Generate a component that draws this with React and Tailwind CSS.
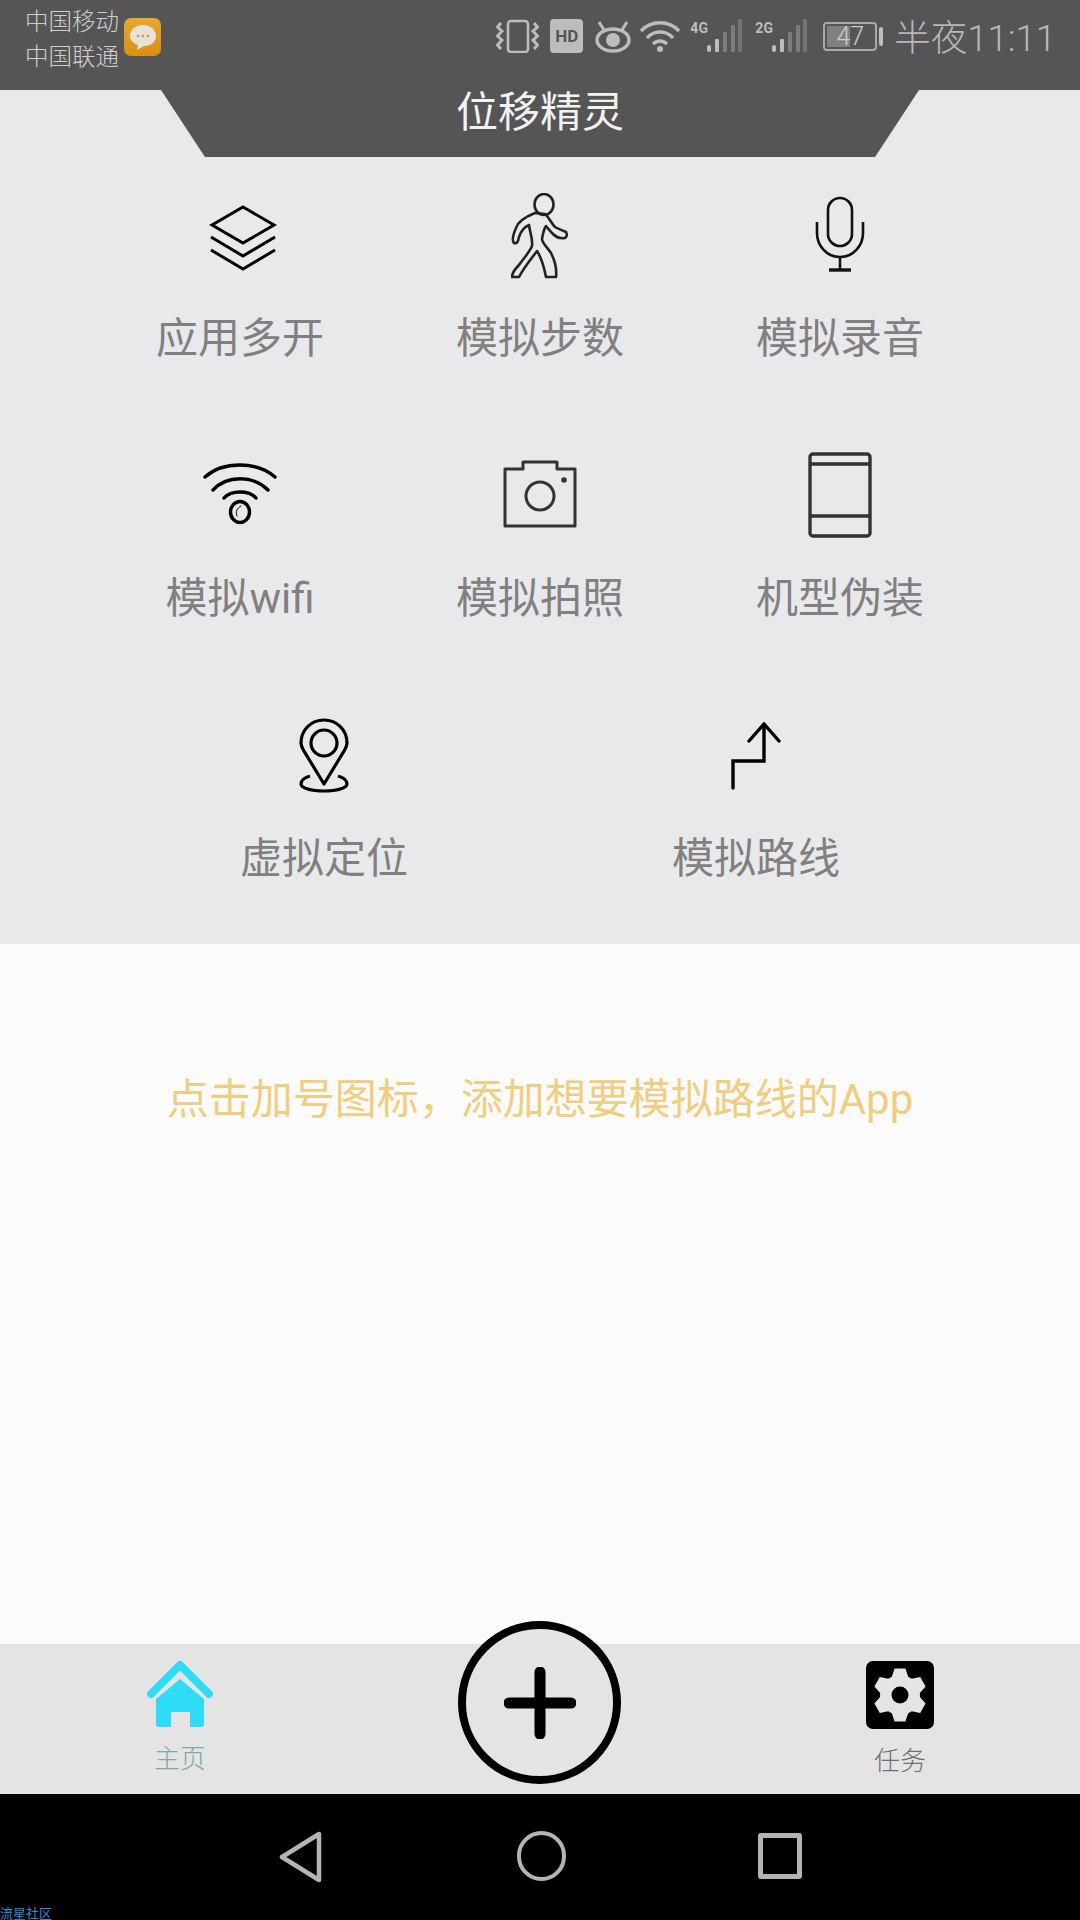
import React from "react";

const FONT = "font-['Roboto','Noto_Sans_CJK_SC',sans-serif]";

// six-tooth gear outline, tooth pointing up
const gearPoints = (cx, cy, outer, inner) => {
    const pts = [];
    for (let i = 0; i < 6; i++) {
        const a = (i * Math.PI) / 3 - Math.PI / 2;
        [
            [inner, -0.42],
            [outer, -0.2],
            [outer, 0.2],
            [inner, 0.42],
        ].forEach(([r, d]) => {
            pts.push(`${(cx + r * Math.cos(a + d)).toFixed(1)},${(cy + r * Math.sin(a + d)).toFixed(1)}`);
        });
    }
    return pts.join(" ");
};

const LayersIcon = () => (
    <svg width="68" height="66" viewBox="0 0 68 66" fill="none" stroke="#000" strokeWidth="3" strokeLinejoin="miter" className="mt-[6px] ml-[6px]">
        <path d="M34 2 L65 20 L34 38 L3 20 Z" />
        <path d="M2 32 L34 51 L66 32" />
        <path d="M2 45 L34 64 L66 45" />
    </svg>
);

const WalkerIcon = () => (
    <svg width="58" height="86" viewBox="0 0 58 86" fill="none" stroke="#222" strokeWidth="2.6" strokeLinejoin="round" className="mt-[2px]">
        <ellipse cx="33" cy="11.5" rx="9.5" ry="10.5" />
        <path d="M24 20 C14 24 7 28 5 35 C2 42 1 48 3 50 C6 51 7 49 8 44 C10 38 13 34 18 32 C19 40 22 46 21 53 C18 60 12 66 8 72 C3 77 1 80 1 84 L8 84 C12 76 20 66 26 58 C30 64 33 74 35 84 L45 84 C46 76 44 68 40 60 C36 54 31 50 31 46 C32 40 33 36 35 33 C39 38 44 45 50 45 C55 46 57 43 55 39 C51 37 47 36 44 34 C40 30 38 24 34 21 Z" />
    </svg>
);

const MicIcon = () => (
    <svg width="50" height="76" viewBox="0 0 50 76" fill="none" stroke="#111" strokeWidth="2.6" className="-mt-[2px]">
        <rect x="13" y="2" width="24" height="48" rx="12" />
        <path d="M2 26 V37 C2 50 12 61 25 61 C38 61 48 50 48 37 V26" />
        <path d="M25 61 V73" />
        <path d="M14 74 H36" strokeWidth="3.4" />
    </svg>
);

const WifiIcon = () => (
    <svg width="74" height="62" viewBox="0 0 74 62" fill="none" stroke="#000" strokeWidth="3.4" strokeLinecap="round" className="-mt-[2px]">
        <path d="M2 14 C20 -2 54 -2 72 14" />
        <path d="M10 27 C24 12 50 12 65 27" />
        <path d="M21 35 C28 27 46 27 53 35" />
        <ellipse cx="37" cy="49" rx="9.5" ry="10.5" />
        <path d="M34 53 C32 49 34 45 38 43" strokeWidth="1" />
    </svg>
);

const CameraIcon = () => (
    <svg width="76" height="68" viewBox="0 0 76 68" fill="none" stroke="#333" strokeWidth="3" strokeLinejoin="round" className="-mt-[2px]">
        <path d="M3 9 H21 V2 H55 V9 H73 V66 H3 Z" />
        <ellipse cx="38" cy="36" rx="14" ry="14" />
        <circle cx="62" cy="20" r="2.8" fill="#333" stroke="none" />
    </svg>
);

const PhoneIcon = () => (
    <svg width="64" height="86" viewBox="0 0 64 86" fill="none" stroke="#333" strokeWidth="3.4">
        <rect x="2" y="2" width="60" height="82" rx="3" />
        <path d="M2 12 H62 M2 64 H62" />
    </svg>
);

const PinIcon = () => (
    <svg width="50" height="75" viewBox="0 0 50 75" fill="none" stroke="#000" strokeWidth="3.2" strokeLinejoin="round">
        <path d="M25 66 L8 38 C4 32 2 29 2 25 C2 12 12 2 25 2 C38 2 48 12 48 25 C48 29 46 32 42 38 Z" />
        <ellipse cx="25" cy="25" rx="13" ry="13" />
        <path d="M11 58 C4 60 2 63 2 66 C2 70 12 73 25 73 C38 73 48 70 48 66 C48 63 46 60 39 58" />
    </svg>
);

const RouteIcon = () => (
    <svg width="52" height="68" viewBox="0 0 52 68" fill="none" stroke="#000" strokeWidth="3.4" strokeLinecap="round" className="mt-[1px]">
        <path d="M3 66 V39 H34 V3" />
        <path d="M19 19 L34 2 L49 19" />
    </svg>
);

const HomeIcon = () => (
    <svg width="66" height="66" viewBox="0 0 66 66" fill="#2fdcf8">
        <path d="M4 33 L33 4 L62 33" fill="none" stroke="#2fdcf8" strokeWidth="8" strokeLinecap="round" strokeLinejoin="round" />
        <path d="M33 18 L57 38 V63 C57 65 56 66 54 66 H43 V51 H24 V66 H12 C10 66 9 65 9 63 V38 Z" />
    </svg>
);

const GearIcon = () => (
    <svg width="68" height="68" viewBox="0 0 68 68">
        <rect width="68" height="68" rx="7" fill="#000" />
        <polygon points={gearPoints(34, 34, 27, 20)} fill="#e4e4e4" />
        <circle cx="34" cy="34" r="8.5" fill="#000" />
    </svg>
);

const Feature = ({ icon, label }) => (
    <div className="flex flex-col items-center">
        <div className="flex h-[90px] items-center justify-center">{icon}</div>
        <div className="mt-[34px] mb-[-2px] text-[42px] leading-[50px] text-[#808080]">{label}</div>
    </div>
);

const SignalBars = () => (
    <svg width="36" height="34" viewBox="0 0 36 34" className="-ml-[2px]">
        <rect x="1" y="26" width="4" height="7" rx="2" fill="#bdbdbd" />
        <rect x="9" y="20" width="4" height="13" rx="1" fill="#bdbdbd" />
        <rect x="17" y="13" width="4" height="20" rx="1" fill="#7d7d7d" />
        <rect x="25" y="6" width="4" height="27" rx="1" fill="#7d7d7d" />
        <rect x="32" y="0" width="4" height="33" rx="1" fill="#747474" />
    </svg>
);

const StatusBar = () => (
    <div className="flex h-[90px] items-start bg-[#555555] pr-[24px] pl-[25px]">
        <div className="mt-[5px] text-[23.5px] leading-[35px] font-light text-[#cfcfcf]">
            <div>中国移动</div>
            <div>中国联通</div>
        </div>
        <div className="mt-[18px] ml-[5px] flex h-[38px] w-[37px] items-center justify-center rounded-[7px] bg-gradient-to-b from-[#e6a92e] to-[#d98f12]">
            <svg width="28" height="28" viewBox="0 0 28 28">
                <path d="M14 2 C22 2 27 7 27 13 C27 19 22 23 15 23 L8 27 L9 22 C4 20 1 17 1 13 C1 7 6 2 14 2 Z" fill="#e8e2d4" />
                <circle cx="9" cy="13" r="1.3" fill="#d09a3a" />
                <circle cx="14" cy="13" r="1.3" fill="#d09a3a" />
                <circle cx="19" cy="13" r="1.3" fill="#d09a3a" />
            </svg>
        </div>
        <div className="mt-[18px] ml-auto flex h-[36px] items-center text-[#bdbdbd]">
            <svg width="43" height="34" viewBox="0 0 43 34" fill="none" stroke="#bdbdbd">
                <rect x="12" y="2" width="20" height="31" rx="3" strokeWidth="2.6" />
                <path d="M5 4 L1.5 8 L6 12 L1.5 17 L6 21 L1.5 26 L5 30" strokeWidth="3" />
                <path d="M38 4 L41.5 8 L37 12 L41.5 17 L37 21 L41.5 26 L38 30" strokeWidth="3" />
            </svg>
            <div className="ml-[11px] flex h-[34px] w-[33px] items-center justify-center rounded-[4px] bg-[#bdbdbd] text-[17px] leading-none font-bold text-[#555555]">
                HD
            </div>
            <svg width="38" height="34" viewBox="0 0 38 34" fill="none" stroke="#bdbdbd" className="ml-[11px]">
                <ellipse cx="19" cy="21" rx="16" ry="11" strokeWidth="3.4" />
                <circle cx="19" cy="21" r="7" fill="#bdbdbd" stroke="none" />
                <path d="M5 3 L10 11 M33 3 L28 11" strokeWidth="3" />
            </svg>
            <svg width="40" height="33" viewBox="0 0 40 33" fill="none" stroke="#bdbdbd" strokeWidth="3.4" className="ml-[8px]">
                <path d="M1 11 C11 0 29 0 39 11" />
                <path d="M7 18 C14 10 26 10 33 18" />
                <path d="M13 24 C17 20 23 20 27 24" />
                <circle cx="20" cy="29" r="3" fill="#bdbdbd" stroke="none" />
            </svg>
            <div className="-mt-[16px] ml-[10px] w-[18px] text-[14px] leading-none font-bold text-[#bdbdbd]">4G</div>
            <SignalBars />
            <div className="-mt-[16px] ml-[13px] w-[18px] text-[14px] leading-none font-bold text-[#bdbdbd]">2G</div>
            <SignalBars />
            <div className="relative ml-[16px] flex h-[29px] w-[54px] items-center rounded-[4px] border-2 border-[#a9a9a9] p-[2px]">
                <div className="h-full w-[23px] bg-[#808080]" />
                <span className="absolute inset-0 text-center text-[25px] leading-[25px] font-light text-[#cccccc]">47</span>
            </div>
            <div className="ml-[2px] h-[19px] w-[4px] rounded-[2px] bg-[#bdbdbd]" />
            <div className="mt-[6px] ml-[11px] text-[36.5px] leading-[36px] font-light whitespace-nowrap text-[#b8b8b8]">半夜11:11</div>
        </div>
    </div>
);

export default function App() {
    return (
        <div className={`flex h-[1920px] w-[1080px] flex-col bg-black ${FONT}`}>
            <StatusBar />

            {/* feature panel */}
            <div className="h-[854px] bg-[#e9e9eb]">
                <div className="mx-auto flex h-[67px] w-[758px] justify-center bg-[#555555] [clip-path:polygon(0_0,100%_0,94.2%_100%,5.8%_100%)]">
                    <div className="pt-[1px] text-[42px] leading-[43px] text-[#f2f2f2]">位移精灵</div>
                </div>
                <div className="mt-[33px] grid grid-cols-3 gap-y-[88px] px-[90px]">
                    <Feature icon={<LayersIcon />} label="应用多开" />
                    <Feature icon={<WalkerIcon />} label="模拟步数" />
                    <Feature icon={<MicIcon />} label="模拟录音" />
                    <Feature icon={<WifiIcon />} label="模拟wifi" />
                    <Feature icon={<CameraIcon />} label="模拟拍照" />
                    <Feature icon={<PhoneIcon />} label="机型伪装" />
                </div>
                <div className="mt-[88px] grid grid-cols-2 px-[108px]">
                    <Feature icon={<PinIcon />} label="虚拟定位" />
                    <Feature icon={<RouteIcon />} label="模拟路线" />
                </div>
            </div>

            {/* empty list */}
            <div className="h-[700px] bg-[#fbfbfb] pt-[131px] text-center text-[42px] leading-[50px] text-[#f0cd80]">
                点击加号图标，添加想要模拟路线的App
            </div>

            {/* tab bar */}
            <div className="grid h-[150px] grid-cols-3 bg-[#e4e4e4]">
                <div className="flex flex-col items-center pt-[17px]">
                    <HomeIcon />
                    <div className="mt-[17px] text-[26px] leading-[30px] font-light text-[#7fa8a8]">主页</div>
                </div>
                <div className="flex justify-center">
                    <div className="-mt-[23px] -ml-[1px] flex h-[163px] w-[163px] items-center justify-center rounded-full border-[8px] border-black bg-[#e4e4e4]">
                        <svg width="72" height="72" viewBox="0 0 72 72" stroke="#000" strokeWidth="11" strokeLinecap="round">
                            <path d="M36 5 V67 M5 36 H67" />
                        </svg>
                    </div>
                </div>
                <div className="flex flex-col items-center pt-[17px]">
                    <GearIcon />
                    <div className="mt-[17px] text-[26px] leading-[30px] font-light text-[#6f6f6f]">任务</div>
                </div>
            </div>

            {/* nav bar */}
            <div className="relative flex h-[126px] items-start justify-center bg-black pt-[37px]">
                <svg width="44" height="52" viewBox="0 0 44 52" fill="none" stroke="#b4b4b4" strokeWidth="4.5" strokeLinejoin="round" className="mr-[194px]">
                    <path d="M40 3 V49 L3 26 Z" />
                </svg>
                <div className="h-[50px] w-[49px] rounded-full border-[4px] border-[#b4b4b4]" />
                <div className="mt-[2px] ml-[192px] h-[46px] w-[44px] rounded-[3px] border-[5px] border-[#b4b4b4]" />
                <div className="absolute bottom-0 left-0 text-[13px] leading-[13px] text-[#2a8fd8]">流星社区</div>
            </div>
        </div>
    );
}
